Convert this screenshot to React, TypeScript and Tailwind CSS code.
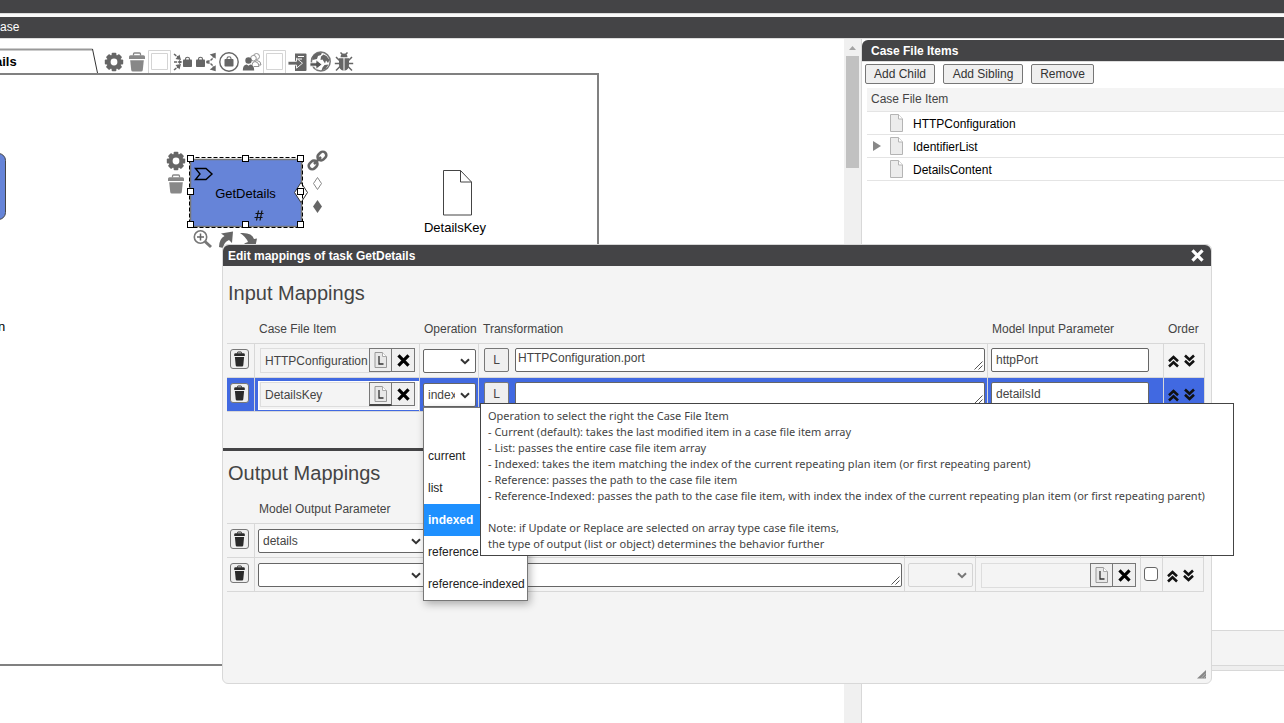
import React from "react";

/* ---------- icons ---------- */

const Gear = ({ size = 20, color = "#666" }: { size?: number; color?: string }) => (
  <svg width={size} height={size} viewBox="0 0 20 20">
    <g fill={color}>
      {[0, 45, 90, 135].map((a) => (
        <rect key={a} x="7.6" y="0.8" width="4.8" height="18.4" rx="1" transform={`rotate(${a} 10 10)`} />
      ))}
      <circle cx="10" cy="10" r="7.3" />
    </g>
    <circle cx="10" cy="10" r="3.4" fill="#fff" />
  </svg>
);

const Bin = ({ size = 20, color = "#888" }: { size?: number; color?: string }) => (
  <svg width={size} height={size} viewBox="0 0 20 20">
    <path d="M6.500 3.500V2q0-1 1-1h5q1 0 1 1v1.500" fill="none" stroke={color} strokeWidth="1.300" />
    <path d="M3.500 3.200h13q1.500 0 1.500 1.500v2.300H2V4.700q0-1.500 1.500-1.500z" fill={color} />
    <path d="M3.200 8.200h13.600L15.800 18q-.2 1.600-1.700 1.600H5.900q-1.500 0-1.700-1.600z" fill={color} />
  </svg>
);

const SmallBin = () => (
  <svg width="15" height="16" viewBox="0 0 15 16">
    <path d="M5.500 2.500V1.600q0-.6.6-.6h2.800q.6 0 .6.600v.9" fill="none" stroke="#2a2a2a" />
    <path d="M3.500 2.200h8q1.300 0 1.300 1.300V5H2.200V3.500q0-1.300 1.300-1.300z" fill="#2a2a2a" />
    <path d="M2.900 6h9.200l-.8 8.300q-.1 1.200-1.300 1.200H5q-1.200 0-1.300-1.200z" fill="#2a2a2a" />
  </svg>
);

const Bag = ({ x, y }: { x: number; y: number }) => (
  <g transform={`translate(${x} ${y})`}>
    <path d="M2.500 3V2q0-1.700 2-1.700t2 1.700v1" fill="none" stroke="#666" strokeWidth="1.100" />
    <rect x="0" y="2.600" width="9" height="7.400" rx=".8" fill="#666" />
  </g>
);

const BagIn = () => (
  <svg width="20" height="20" viewBox="0 0 20 20">
    <Bag x={10} y={5} />
    <path d="M1 2l5 4M1 18l5-4M1 10h6" stroke="#666" strokeWidth="1.500" fill="none" strokeDasharray="3 .8" />
    <path d="M8 8L2.500 7l4-4.500zM8 12l-5.500 1 4 4.500zM9.500 10L6 8v4z" fill="#666" />
  </svg>
);

const BagOut = () => (
  <svg width="20" height="20" viewBox="0 0 20 20">
    <Bag x={0} y={5} />
    <path d="M10.500 9.500q6-.5 7-5.500M10.500 10.500q6 .5 7 5.500" stroke="#666" strokeWidth="1.500" fill="none" strokeDasharray="3 1" />
    <path d="M19.700 .800v6L13.700 2.500zM19.700 19.200v-6L13.700 17.500z" fill="#666" />
    <circle cx="11.500" cy="10" r="1.200" fill="#666" />
  </svg>
);

const BagRound = () => (
  <svg width="20" height="20" viewBox="0 0 20 20">
    <circle cx="10" cy="10" r="9.200" fill="none" stroke="#666" strokeWidth="1.400" />
    <Bag x={5.500} y={4.500} />
  </svg>
);

const People = () => (
  <svg width="20" height="20" viewBox="0 0 20 20">
    <g fill="#fff" stroke="#888" strokeWidth=".9">
      <path d="M13 11q0-2 2-2.500 4 .5 4 4.500h-5" />
      <circle cx="14.500" cy="4.500" r="3" />
      <path d="M10 13q0-3 3-3.500 4 .5 4 5h-5" />
      <circle cx="11.500" cy="6.200" r="2.800" />
    </g>
    <circle cx="6.500" cy="8.500" r="3.200" fill="#666" />
    <path d="M.8 18.500q0-6 4-6l1.700 1.200 1.700-1.200q4 0 4 6z" fill="#666" />
  </svg>
);

const ImportDoc = () => (
  <svg width="20" height="20" viewBox="0 0 20 20">
    <path d="M7 1.500h10.500q1 0 1 1v15.500q0 1-1 1H7z" fill="#666" />
    <path d="M10 4.500h6M10 7h4" stroke="#fff" strokeWidth="1.200" />
    <path d="M0 9.300h8.500V6.200l6 5-6 5v-3.100H0z" fill="#666" stroke="#fff" strokeWidth=".9" />
  </svg>
);

const Globe = () => (
  <svg width="21" height="21" viewBox="0 0 21 21">
    <circle cx="10.800" cy="10.500" r="9.400" fill="#fff" stroke="#777" strokeWidth="1.500" />
    <path d="M2.500 5.500Q6 1 12 1.500l-1 2.500-3 1-1 3-4.500 1zM11 5.500l2.500-2 3 1.500 3 4-1.500 3-2-2.500-1 3-2.500-4-2 .5zM14.500 14l4-.5-3 4.500-4 1.500 1-3z" fill="#666" />
    <path d="M0 11.800h6V8.800l6 4.700-6 4.700v-3H0z" fill="#555" stroke="#fff" strokeWidth=".8" />
  </svg>
);

const Bug = () => (
  <svg width="20" height="20" viewBox="0 0 20 20">
    <path d="M6.500 5.300Q6.500 1.500 10 1.500t3.500 3.800z" fill="#666" />
    <path d="M5 6.300h4.500v12.400q-4.500-.7-4.500-6.200zM10.500 6.300H15v6.200q0 5.500-4.500 6.200z" fill="#666" />
    <path d="M5.500 8.500L2 5M14.500 8.500L18 5M5 11.500H.8M15 11.500h4.200M6 14.500l-4 4M14 14.500l4 4M8.500 2.500L6.500.5M11.500 2.500l2-2" fill="none" stroke="#666" strokeWidth="1.500" />
  </svg>
);

const PageIcon = () => (
  <svg width="13" height="18" viewBox="0 0 13 18">
    <path d="M.5.500h8l4 4.500v12.500H.5z" fill="#ececec" stroke="#b4b4b4" />
    <path d="M8.500 .5V5h4" fill="#fff" stroke="#b4b4b4" />
  </svg>
);

const Cross = ({ color = "#000", size = 14 }: { color?: string; size?: number }) => (
  <svg width={size} height={size} viewBox="0 0 14 14">
    <path d="M2.300 2.300l9.400 9.400M11.700 2.300l-9.400 9.400" stroke={color} strokeWidth="3" />
  </svg>
);

const DoubleChevron = ({ down = false }: { down?: boolean }) => (
  <svg width="11" height="14" viewBox="0 0 11 14" className={down ? "rotate-180" : ""}>
    <path d="M1 7.200L5.500 3l4.500 4.200M1 12.500l4.500-4.200 4.500 4.200" fill="none" stroke="#111" strokeWidth="2.600" />
  </svg>
);

/* ---------- small controls ---------- */

const Picker = ({
  label,
  value = "",
  options,
  className,
  disabled = false,
}: {
  label: string;
  value?: string;
  options: string[];
  className: string;
  disabled?: boolean;
}) => (
  <div className={`relative h-6 ${className}`}>
    <select
      aria-label={label}
      defaultValue={value}
      disabled={disabled}
      className={`block h-6 w-full appearance-none rounded-[2px] border pl-1 pr-5 text-xs text-[#444] ${
        disabled ? "border-[#d4d4d4] bg-[#f4f4f4]" : "border-[#666] bg-white"
      }`}
    >
      {options.map((o) => (
        <option key={o} value={o}>
          {o}
        </option>
      ))}
    </select>
    <svg width="10" height="7" viewBox="0 0 10 7" className="pointer-events-none absolute right-1.5 top-[9px]">
      <path d="M1 1.200l4 4 4-4" fill="none" stroke={disabled ? "#777" : "#333"} strokeWidth="2" />
    </svg>
  </div>
);

const DeleteButton = () => (
  <button aria-label="Delete mapping" className="ml-[3px] flex h-5 w-[19px] items-center justify-center rounded-[3px] border border-[#777] bg-[#efefef]">
    <SmallBin />
  </button>
);

const ItemPicker = ({ value = "", active = false }: { value?: string; active?: boolean }) => (
  <div className={`flex h-[29px] border pl-px ${active ? "border-white bg-[#f4f4f4]" : "border-transparent"}`}>
    <input
      aria-label="Case file item"
      defaultValue={value}
      readOnly
      className="h-[25px] w-[130px] shrink-0 border border-[#ddd] bg-transparent pl-1 text-xs text-[#444]"
    />
    <button
      aria-label="Locate item"
      className={`relative -ml-[21px] flex h-6 w-[23px] shrink-0 items-center justify-center border bg-[#efefef] ${
        active ? "border-[#777] border-b-2 border-b-[#444]" : "border-[#777]"
      }`}
    >
      <svg width="13" height="16" viewBox="0 0 13 16">
        <path d="M1 .500h7.500l4 4v11H1z" fill="#e8e8e8" stroke="#999" />
        <path d="M8.500 .5v4h4" fill="#fff" stroke="#aaa" />
        <path d="M5 4v8h4.500" fill="none" stroke="#333" strokeWidth="1.300" />
      </svg>
    </button>
    <button aria-label="Clear item" className="-ml-px flex h-6 w-6 shrink-0 items-center justify-center border border-[#777] bg-[#efefef]">
      <Cross size={15} />
    </button>
  </div>
);

const Transformation = ({ value = "" }: { value?: string }) => (
  <div className="flex gap-1.5 pr-0.5">
    <button className="h-6 w-[25px] shrink-0 rounded-[2px] border border-[#777] bg-[#efefef] text-xs text-[#444]">L</button>
    <div className="relative h-6 min-w-0 flex-1">
      <textarea
        aria-label="Transformation"
        defaultValue={value}
        className="block h-6 w-full resize-none overflow-hidden rounded-[2px] border border-[#666] bg-white px-0.5 pt-px text-xs text-[#444]"
      />
      <svg width="9" height="9" viewBox="0 0 9 9" className="pointer-events-none absolute bottom-0.5 right-0.5">
        <path d="M.5 8.500l8-8M4.500 8.500l4-4" stroke="#555" strokeWidth="1" />
      </svg>
    </div>
  </div>
);

const OrderButtons = () => (
  <div className="flex gap-[5px] pl-1 pt-1.5">
    <button aria-label="Move up" className="h-3.5"><DoubleChevron /></button>
    <button aria-label="Move down" className="h-3.5"><DoubleChevron down /></button>
  </div>
);

/* ---------- page parts ---------- */

const BlankSlot = () => (
  <svg width="23" height="23" viewBox="0 0 23 23">
    <path d="M.5 23V.5h22V23M3.500 3.500h16v16h-16z" fill="#fff" stroke="#d4d4d4" />
  </svg>
);

const tools: [string, React.ReactNode][] = [
  ["Properties", <Gear />],
  ["Delete", <Bin />],
  ["Preview", <BlankSlot />],
  ["Input parameters", <BagIn />],
  ["Output parameters", <BagOut />],
  ["Case file", <BagRound />],
  ["Case team", <People />],
  ["Roles", <BlankSlot />],
  ["View source", <ImportDoc />],
  ["Deploy", <Globe />],
  ["Debug", <Bug />],
];

const handles: [number, number][] = [
  [190, 159], [245, 159], [300, 159],
  [190, 192], [300, 192],
  [190, 225], [245, 225], [300, 225],
];

const Diagram = () => (
  <svg className="absolute left-0 top-0 overflow-visible font-['Liberation_Sans',sans-serif]" width="597" height="590">
    <g transform="translate(0 -75)" fontSize="13">
      <rect x="-100" y="153.500" width="105.500" height="66" rx="7" fill="#6684d8" stroke="#444" />
      <text x="-2" y="331">n</text>

      <rect x="190.500" y="159.500" width="111" height="67" fill="#6684d8" stroke="#777" strokeWidth="1.500" />
      <path d="M195.500 168.500h10.500l6 5.500-6 5.500h-10.500l4.500-5.500z" fill="none" stroke="#000" strokeWidth="1.400" />
      <text x="245.500" y="198" textAnchor="middle">GetDetails</text>
      <path d="M258.500 210.500l-2 10M262 210.500l-2 10M255.500 213.500h8M254.500 217.500h8" stroke="#111" strokeWidth="1.200" />
      <path d="M301 182.500l6.500 10-6.500 10-6.500-10z" fill="#fff" stroke="#333" />
      <rect x="189.500" y="157.500" width="113" height="70" fill="none" stroke="#000" strokeDasharray="4 2" />
      {handles.map(([x, y]) => (
        <rect key={`${x}-${y}`} x={x - 2.5} y={y - 3.500} width="6" height="6" fill="#fff" stroke="#000" />
      ))}

      <g transform="translate(166 151)"><Gear size={20} color="#666" /></g>
      <g transform="translate(166 174)"><Bin size={20} /></g>

      <g transform="translate(317.500 160.500) rotate(-45)" fill="none" stroke="#666" strokeWidth="2.600">
        <rect x="-11" y="-3.500" width="9.500" height="7" rx="3.500" />
        <rect x="1.500" y="-3.500" width="9.500" height="7" rx="3.500" />
        <path d="M-5 0h10" />
      </g>
      <path d="M317.500 177.500l4 6-4 6-4-6z" fill="#fff" stroke="#888" />
      <path d="M317.500 200l4.500 6.500-4.500 6.500-4.500-6.500z" fill="#666" />

      <circle cx="200.500" cy="237" r="6.200" fill="none" stroke="#777" strokeWidth="1.600" />
      <path d="M197 237h7M200.500 233.500v7" stroke="#666" strokeWidth="1.500" />
      <path d="M205 241.500l6 5.500" stroke="#777" strokeWidth="3" />
      <path d="M219 247q0-8 5.500-11l-3.500-2.500 12-2-1 11.500-3-3q-5 2-6 8z" fill="#666" />
      <path d="M240 233q12-1 14 6l3-.5-2 9.500-11-4.500 4-1.500q-2-5-8-9z" fill="#666" />

      <path d="M443.500 170.500h17l11 11.500v33h-28z" fill="#fff" stroke="#444" />
      <path d="M460.500 170.500v11.500h11" fill="none" stroke="#444" />
      <text x="455" y="232" textAnchor="middle">DetailsKey</text>
    </g>
  </svg>
);

const Canvas = () => (
  <section className="min-w-0 flex-1 overflow-hidden">
    <div className="flex h-[34px] items-end">
      <svg width="102" height="25" viewBox="0 0 102 25" className="shrink-0 font-['Liberation_Sans',sans-serif]">
        <path d="M0 1.500h92.500" stroke="#999" strokeWidth="2" />
        <path d="M92.500 1l5 24" stroke="#333" fill="none" />
        <text x="-5" y="18" fontSize="13" fontWeight="bold">ails</text>
      </svg>
      <div className="flex h-[23px]">
        {tools.map(([name, icon]) => (
          <button key={name} aria-label={name} className="flex h-[23px] w-[23px] items-center justify-center">
            {icon}
          </button>
        ))}
      </div>
    </div>
    <div className="relative h-[593px] w-[599px] border-y-2 border-r-2 border-[#808080]">
      <Diagram />
    </div>
  </section>
);

const files = ["HTTPConfiguration", "IdentifierList", "DetailsContent"];

const FilePanel = () => (
  <aside className="flex w-[423px] shrink-0 flex-col border-l border-[#d8d8d8] pt-px">
    <h2 className="h-[21px] rounded-tl-md bg-[#444446] pl-[9px] text-xs font-bold leading-[22px] text-white">Case File Items</h2>
    <div className="flex gap-2 border-t border-[#ddd] py-0.5 pl-[3px]">
      <button className="h-5 w-[70px] rounded-[2px] border border-[#767676] bg-[#efefef] text-xs text-[#333]">Add Child</button>
      <button className="h-5 w-20 rounded-[2px] border border-[#767676] bg-[#efefef] text-xs text-[#333]">Add Sibling</button>
      <button className="h-5 w-[63px] rounded-[2px] border border-[#767676] bg-[#efefef] text-xs text-[#333]">Remove</button>
    </div>
    <div className="pl-[5px] pt-0.5">
      <table className="w-full border-separate border-spacing-0 text-xs">
        <thead>
          <tr>
            <th className="h-6 border-b border-[#e4e4e4] bg-[#f4f4f4] p-0 pb-0.5 pl-1 text-left font-normal text-[#444]">Case File Item</th>
          </tr>
        </thead>
        <tbody>
          {files.map((f) => (
            <tr key={f}>
              <td className="h-[23px] border-b border-[#e4e4e4] p-0 pl-[5px]">
                <div className="flex h-[22px] items-center">
                  <span className="w-[18px]">
                    {f === "IdentifierList" && (
                      <svg width="10" height="10" viewBox="0 0 10 10">
                        <path d="M1 0l8 5-8 5z" fill="#888" />
                      </svg>
                    )}
                  </span>
                  <span className="w-[23px]"><PageIcon /></span>
                  <span className="leading-[22px] pt-px">{f}</span>
                </div>
              </td>
            </tr>
          ))}
        </tbody>
      </table>
    </div>
    <div className="flex-1" />
    <div className="h-[35px] border-t border-[#d8d8d8] bg-[#f4f4f4]" />
    <div className="h-1.5 border-y border-[#d8d8d8] bg-[#eee]" />
    <div className="h-[52px]" />
  </aside>
);

const th = "h-[37px] border-b border-[#d8d8d8] p-0 pt-2 text-left font-normal";
const td = "h-[34px] border-b border-r border-[#d8d8d8] p-0 align-top";
const operations = ["", "current", "list", "indexed", "reference", "reference-indexed"];

const inputs = [
  { item: "HTTPConfiguration", op: "", code: "HTTPConfiguration.port", param: "httpPort", active: false },
  { item: "DetailsKey", op: "indexed", code: "", param: "detailsId", active: true },
];

const MappingDialog = () => (
  <div role="dialog" aria-label="Edit mappings" className="absolute left-[222px] top-[244px] w-[990px] rounded-md border border-[#d8d8d8] bg-[#f4f4f4] pb-[91px] text-xs text-[#444]">
    <div className="flex h-[21px] items-center justify-between rounded-t-md bg-[#444446] pl-[5px] pr-1.5">
      <h1 className="font-bold text-white">Edit mappings of task GetDetails</h1>
      <button aria-label="Close"><Cross color="#fff" size={15} /></button>
    </div>
    <section className="border-b-[3px] border-[#444446] px-1 pb-9 pt-[13px]">
      <h2 className="pl-px text-xl">Input Mappings</h2>
      <table className="w-[978px] table-fixed border-separate border-spacing-0">
        <colgroup>
          <col className="w-7" />
          <col className="w-[165px]" />
          <col className="w-[59px]" />
          <col />
          <col className="w-[176px]" />
          <col className="w-[41px]" />
        </colgroup>
        <thead>
          <tr>
            <th className={th} />
            <th className={`${th} pl-1`}>Case File Item</th>
            <th className={`${th} pl-1`}>Operation</th>
            <th className={`${th} pl-1`}>Transformation</th>
            <th className={`${th} pl-1`}>Model Input Parameter</th>
            <th className={`${th} pl-1`}>Order</th>
          </tr>
        </thead>
        <tbody>
          {inputs.map((r) => (
            <tr key={r.item} className={r.active ? "bg-[#4169e1]" : ""}>
              <td className={`${td} pt-[5px]`}><DeleteButton /></td>
              <td className={`${td} pl-[3px] pt-[3px]`}><ItemPicker value={r.item} active={r.active} /></td>
              <td className={`${td} pl-[3px] pt-[5px]`}><Picker label="Operation" value={r.op} options={operations} className="w-[53px]" /></td>
              <td className={`${td} pl-[5px] pt-1`}><Transformation value={r.code} /></td>
              <td className={`${td} pl-[3px] pt-1`}>
                <input aria-label="Model input parameter" defaultValue={r.param} className="block h-6 w-[158px] rounded-[2px] border border-[#666] bg-white pl-1 text-xs text-[#444]" />
              </td>
              <td className={`${td} pt-1`}><OrderButtons /></td>
            </tr>
          ))}
        </tbody>
      </table>
    </section>
    <section className="px-1 pt-2">
      <h2 className="pl-px text-xl">Output Mappings</h2>
      <table className="w-[977px] table-fixed border-separate border-spacing-0">
        <colgroup>
          <col className="w-7" />
          <col className="w-[173px]" />
          <col />
          <col className="w-[71px]" />
          <col className="w-[165px]" />
          <col className="w-[22px]" />
          <col className="w-[41px]" />
        </colgroup>
        <thead>
          <tr>
            <th className={th} />
            <th className={`${th} pl-1`}>Model Output Parameter</th>
            <th className={th} colSpan={5} />
          </tr>
        </thead>
        <tbody>
          {["details", ""].map((value) => (
            <tr key={value}>
              <td className={`${td} pt-[5px]`}><DeleteButton /></td>
              <td className={`${td} pl-[3px] pt-[5px]`}><Picker label="Model output parameter" value={value} options={["", "details"]} className="w-[169px]" /></td>
              <td className={`${td} pl-[5px] pt-[5px]`}><Transformation /></td>
              <td className={`${td} pl-[3px] pt-[5px]`}><Picker label="Operation" options={[""]} disabled className="w-[65px]" /></td>
              <td className={`${td} pl-[3px] pt-1`}><ItemPicker /></td>
              <td className={`${td} pl-[3px] pt-[9px]`}>
                <input type="checkbox" aria-label="Required" className="block h-3.5 w-3.5 appearance-none rounded-[3px] border border-[#666] bg-white" />
              </td>
              <td className={`${td} pt-[5px]`}><OrderButtons /></td>
            </tr>
          ))}
        </tbody>
      </table>
    </section>
    <svg width="9" height="9" viewBox="0 0 9 9" className="absolute bottom-1 right-[5px]">
      <path d="M9 0v8.500H0z" fill="#888" />
      <path d="M3.500 9l5-5.500M6 9l3-3" stroke="#bbb" strokeWidth=".7" />
    </svg>
  </div>
);

const OperationMenu = () => (
  <ul role="listbox" aria-label="Operations" className="absolute left-[423px] top-[407px] w-[105px] border border-[#777] bg-white text-xs text-[#222] shadow-[2px_3px_8px_rgba(0,0,0,0.3)]">
    {operations.map((o) => (
      <li
        key={o}
        role="option"
        aria-selected={o === "indexed"}
        className={`h-8 whitespace-nowrap pl-1 leading-8 ${o === "indexed" ? "bg-[#1e90ff] font-bold text-white" : ""}`}
      >
        {o}
      </li>
    ))}
  </ul>
);

const hint = [
  "Operation to select the right the Case File Item",
  "- Current (default): takes the last modified item in a case file item array",
  "- List: passes the entire case file item array",
  "- Indexed: takes the item matching the index of the current repeating plan item (or first repeating parent)",
  "- Reference: passes the path to the case file item",
  "- Reference-Indexed: passes the path to the case file item, with index the index of the current repeating plan item (or first repeating parent)",
  "",
  "Note: if Update or Replace are selected on array type case file items,",
  "the type of output (list or object) determines the behavior further",
];

const Hint = () => (
  <div role="tooltip" className="absolute left-[480px] top-[403px] w-[754px] border border-[#444] bg-white px-[7px] pb-[3px] pt-1 font-['Noto_Sans',sans-serif] text-[11px] leading-4 text-[#444]">
    {hint.map((line, i) => (
      <p key={i} className="h-4 whitespace-nowrap">{line}</p>
    ))}
  </div>
);

export default function App() {
  return (
    <div className="relative flex min-h-screen flex-col overflow-hidden bg-white font-['Liberation_Sans',Arial,sans-serif] text-black">
      <header>
        <div className="h-3.5 border-b border-[#ddd] bg-[#444446]" />
        <div className="h-[3px] bg-[#fafafa]" />
        <div className="h-[22px] border-b border-[#ddd] bg-[#444446] text-xs leading-[21px] text-white">ase</div>
      </header>
      <main className="flex flex-1">
        <Canvas />
        <div className="flex w-[17px] shrink-0 flex-col items-center bg-[#f0f0f0] pt-[7px]">
          <svg width="7" height="4" viewBox="0 0 7 4">
            <path d="M0 4l3.500-4L7 4z" fill="#a3a3a3" />
          </svg>
          <div className="mt-1.5 h-28 w-[13px] bg-[#c1c1c1]" />
        </div>
        <FilePanel />
      </main>
      <MappingDialog />
      <OperationMenu />
      <Hint />
    </div>
  );
}
